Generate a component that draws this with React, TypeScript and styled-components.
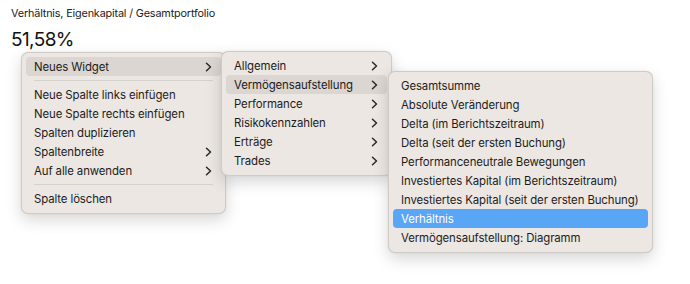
import React from "react";
import styled, { createGlobalStyle } from "styled-components";

const Global = createGlobalStyle`
  html, body { margin: 0; padding: 0; background: #ffffff; }
  body { font-family: Inter, "Noto Sans", "Liberation Sans", sans-serif; color: #1e1e1e; -webkit-font-smoothing: antialiased; }
`;

const Page = styled.div`
  position: relative;
  width: 690px;
  height: 284px;
  overflow: hidden;
`;

const Header = styled.header`
  display: flex;
  flex-direction: column;
  padding: 7px 11px 0;
  gap: 7px;
`;

const Title = styled.div`
  font-size: 10.8px;
  line-height: 14px;
  letter-spacing: -0.15px;
  color: #222;
`;

const Value = styled.div`
  font-size: 19px;
  line-height: 24px;
  letter-spacing: -0.6px;
  color: #111;
`;

const Menu = styled.div<{ $left: number; $top: number; $width: number; $z: number }>`
  position: absolute;
  left: ${(p) => p.$left}px;
  top: ${(p) => p.$top}px;
  width: ${(p) => p.$width}px;
  z-index: ${(p) => p.$z};
  box-sizing: border-box;
  display: flex;
  flex-direction: column;
  padding: 4px 4px 5px;
  background: #ece7e3;
  border: 1px solid rgba(0, 0, 0, 0.12);
  border-radius: 7px;
  box-shadow: 0 6px 16px rgba(0, 0, 0, 0.16), 0 0 2px rgba(0, 0, 0, 0.08);
`;

const Item = styled.div<{ $state?: "hover" | "active" }>`
  display: flex;
  align-items: center;
  justify-content: space-between;
  height: 19px;
  padding: 0 9px 0 8px;
  border-radius: 4px;
  font-size: 11.4px;
  letter-spacing: -0.1px;
  white-space: nowrap;
  color: ${(p) => (p.$state === "active" ? "#ffffff" : "#1c1c1c")};
  background: ${(p) =>
    p.$state === "active" ? "#59a5f6" : p.$state === "hover" ? "#dbd6d2" : "transparent"};
`;

const Separator = styled.div`
  height: 1px;
  margin: 4px 8px;
  background: #d4d0cc;
`;

const Chevron = () => (
  <svg width="7" height="10" viewBox="0 0 7 10" fill="none">
    <path d="M1.5 1.2 L5.5 5 L1.5 8.8" stroke="#2a2a2a" strokeWidth="1.5" strokeLinecap="round" strokeLinejoin="round" />
  </svg>
);

type Entry = { label: string; sub?: boolean; state?: "hover" | "active" } | "sep";

const menu1: Entry[] = [
  { label: "Neues Widget", sub: true, state: "hover" },
  "sep",
  { label: "Neue Spalte links einfügen" },
  { label: "Neue Spalte rechts einfügen" },
  { label: "Spalten duplizieren" },
  { label: "Spaltenbreite", sub: true },
  { label: "Auf alle anwenden", sub: true },
  "sep",
  { label: "Spalte löschen" },
];

const menu2: Entry[] = [
  { label: "Allgemein", sub: true },
  { label: "Vermögensaufstellung", sub: true, state: "hover" },
  { label: "Performance", sub: true },
  { label: "Risikokennzahlen", sub: true },
  { label: "Erträge", sub: true },
  { label: "Trades", sub: true },
];

const menu3: Entry[] = [
  { label: "Gesamtsumme" },
  { label: "Absolute Veränderung" },
  { label: "Delta (im Berichtszeitraum)" },
  { label: "Delta (seit der ersten Buchung)" },
  { label: "Performanceneutrale Bewegungen" },
  { label: "Investiertes Kapital (im Berichtszeitraum)" },
  { label: "Investiertes Kapital (seit der ersten Buchung)" },
  { label: "Verhältnis", state: "active" },
  { label: "Vermögensaufstellung: Diagramm" },
];

const MenuList = ({ entries }: { entries: Entry[] }) => (
  <>
    {entries.map((e, i) =>
      e === "sep" ? (
        <Separator key={i} />
      ) : (
        <Item key={i} $state={e.state}>
          <span>{e.label}</span>
          {e.sub && <Chevron />}
        </Item>
      )
    )}
  </>
);

export default function App() {
  return (
    <>
      <Global />
      <Page>
        <Header>
          <Title>Verhältnis, Eigenkapital / Gesamtportfolio</Title>
          <Value>51,58%</Value>
        </Header>
        <Menu $left={21} $top={52} $width={205} $z={1}>
          <MenuList entries={menu1} />
        </Menu>
        <Menu $left={221} $top={51} $width={171} $z={2}>
          <MenuList entries={menu2} />
        </Menu>
        <Menu $left={388} $top={71} $width={265} $z={3}>
          <MenuList entries={menu3} />
        </Menu>
      </Page>
    </>
  );
}
